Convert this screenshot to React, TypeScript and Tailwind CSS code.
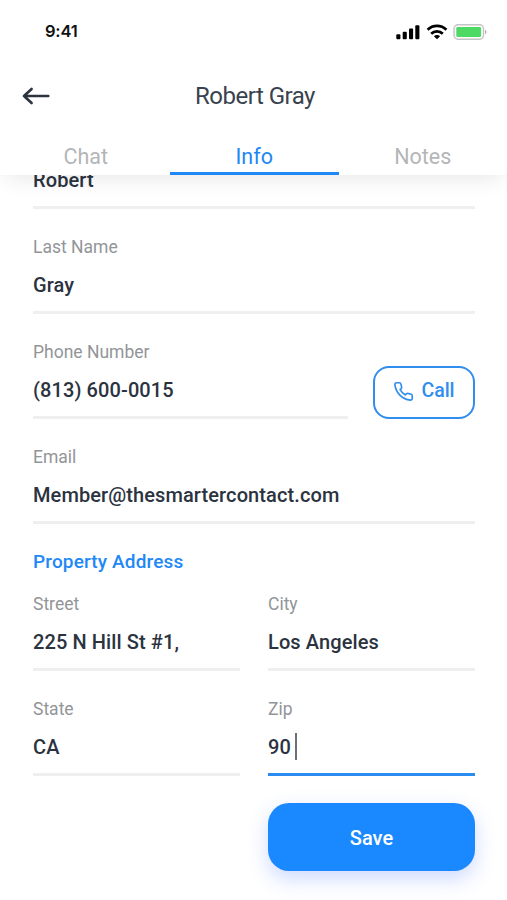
import { cva } from 'class-variance-authority'
import clsx from 'clsx'

const tabs = [
  { label: 'Chat', active: false },
  { label: 'Info', active: true },
  { label: 'Notes', active: false },
]

const underline = cva('border-b-[3px] pb-3', {
  variants: {
    focused: {
      true: 'border-[#2b8cf0]',
      false: 'border-[#efefef]',
    },
  },
  defaultVariants: { focused: false },
})

function Field({
  label,
  value,
  focused = false,
  className,
}: {
  label?: string
  value: string
  focused?: boolean
  className?: string
}) {
  return (
    <div className={clsx(underline({ focused }), className)}>
      {label && <p className="pb-3 pt-[27px] text-[17.5px] leading-[23px] text-[#929598]">{label}</p>}
      <div className="flex h-7 items-center text-[20px] font-medium leading-7 tracking-[0.1px] text-[#2b333f]">
        <span>{value}</span>
        {focused && <span className="relative -top-px ml-1 h-[27px] w-[2px] bg-[#6c7178]" />}
      </div>
    </div>
  )
}

function StatusBar() {
  return (
    <div className="flex h-[63px] items-center justify-between pl-[45px] pr-[20px]">
      <span className="font-[Inter] text-[16.5px] font-semibold tracking-[-0.2px] text-[#111]">9:41</span>
      <div className="flex items-center">
        <svg width="24" height="16" viewBox="0 0 24 16" fill="#000">
          <rect x="0.3" y="10.3" width="4.1" height="5" rx="1" />
          <rect x="6.7" y="7.8" width="4.1" height="7.5" rx="1" />
          <rect x="13" y="4.6" width="4.1" height="10.7" rx="1" />
          <rect x="19.3" y="1.2" width="4.1" height="14.1" rx="1" />
        </svg>
        <svg className="ml-[6px]" width="22" height="16" viewBox="0 0 22 16" fill="none" stroke="#000" strokeWidth="2.7">
          <path d="M1.6 5.8a13.4 13.4 0 0 1 18.8 0" />
          <path d="M5.2 9.8a8.2 8.2 0 0 1 11.6 0" />
          <path d="M11 15.3 7.9 12.3a4.4 4.4 0 0 1 6.2 0z" fill="#000" stroke="none" />
        </svg>
        <svg className="ml-[5px]" width="34" height="18" viewBox="0 0 34 18">
          <rect x="1" y="1.7" width="29.5" height="14.6" rx="4" fill="none" stroke="#c4c4c4" strokeWidth="1.4" />
          <rect x="3.3" y="4" width="24.8" height="10" rx="1.2" fill="#4cd964" />
          <path d="M32 6.8c2 .8 2 3.6 0 4.4z" fill="#b0b0b0" />
        </svg>
      </div>
    </div>
  )
}

export default function App() {
  return (
    <div className="flex h-[900px] w-[507px] flex-col overflow-hidden bg-white font-[Roboto,sans-serif]">
      <header className="relative z-10 h-[175px] shrink-0 bg-white shadow-[0_8px_22px_-6px_rgba(0,0,0,0.11)]">
        <StatusBar />
        <div className="grid h-[65px] grid-cols-[1fr_auto_1fr] items-center pl-[22px] pr-[19px]">
          <button aria-label="Back">
            <svg width="28" height="18" viewBox="0 0 28 18" fill="none" stroke="#2b333f" strokeWidth="2.6" strokeLinecap="round" strokeLinejoin="round">
              <path d="M26.3 9H2M9.6 2 2 9l7.6 7" />
            </svg>
          </button>
          <h1 className="text-[24px] tracking-[-0.5px] text-[#39434f]">Robert Gray</h1>
        </div>
        <nav className="grid h-[47px] grid-cols-3 pl-[1.5px]">
          {tabs.map(({ label, active }) => (
            <button
              key={label}
              className={clsx(
                'border-b-[3px] pt-[14px] text-[21.5px] leading-[30px]',
                active ? 'border-[#2088f5] text-[#2088f5]' : 'border-transparent text-[#b4b5b7]'
              )}
            >
              {label}
            </button>
          ))}
        </nav>
      </header>

      {/* Form, its first value scrolled partly under the header */}
      <main className="-mt-[9px] flex-1 pl-[33px] pr-8">
        <Field value="Robert" />
        <Field label="Last Name" value="Gray" />
        <div className="flex items-end gap-[25px]">
          <Field label="Phone Number" value="(813) 600-0015" className="flex-1" />
          <button className="flex h-[53px] w-[102px] items-center justify-center gap-[7px] rounded-[16px] border-2 border-[#2f8eee] pb-[3px] text-[19.5px] font-medium text-[#2f8eee]">
            <svg width="21" height="21" viewBox="0 0 24 24" fill="none" stroke="currentColor" strokeWidth="1.9" strokeLinecap="round" strokeLinejoin="round">
              <path d="M22 16.92v3a2 2 0 0 1-2.18 2 19.79 19.79 0 0 1-8.63-3.07 19.5 19.5 0 0 1-6-6 19.79 19.79 0 0 1-3.07-8.67A2 2 0 0 1 4.11 2h3a2 2 0 0 1 2 1.72c.127.96.361 1.903.7 2.81a2 2 0 0 1-.45 2.11L8.09 9.91a16 16 0 0 0 6 6l1.27-1.27a2 2 0 0 1 2.11-.45c.907.339 1.85.573 2.81.7A2 2 0 0 1 22 16.92z" />
            </svg>
            Call
          </button>
        </div>
        <Field label="Email" value="Member@thesmartercontact.com" />

        <h2 className="pt-6 text-[19px] font-medium leading-7 tracking-[0.15px] text-[#1e88f7]">Property Address</h2>
        <div className="-mt-[10px] grid grid-cols-2 gap-x-7">
          <Field label="Street" value="225 N Hill St #1," />
          <Field label="City" value="Los Angeles" />
          <Field label="State" value="CA" />
          <Field label="Zip" value="90" focused />
        </div>

        <div className="mt-[27px] flex justify-end">
          <button className="h-[68px] w-[207px] rounded-[21px] bg-[#1a88ff] pt-px text-[20px] font-medium text-white shadow-[0_8px_20px_rgba(60,110,255,0.25)]">
            Save
          </button>
        </div>
      </main>
    </div>
  )
}
